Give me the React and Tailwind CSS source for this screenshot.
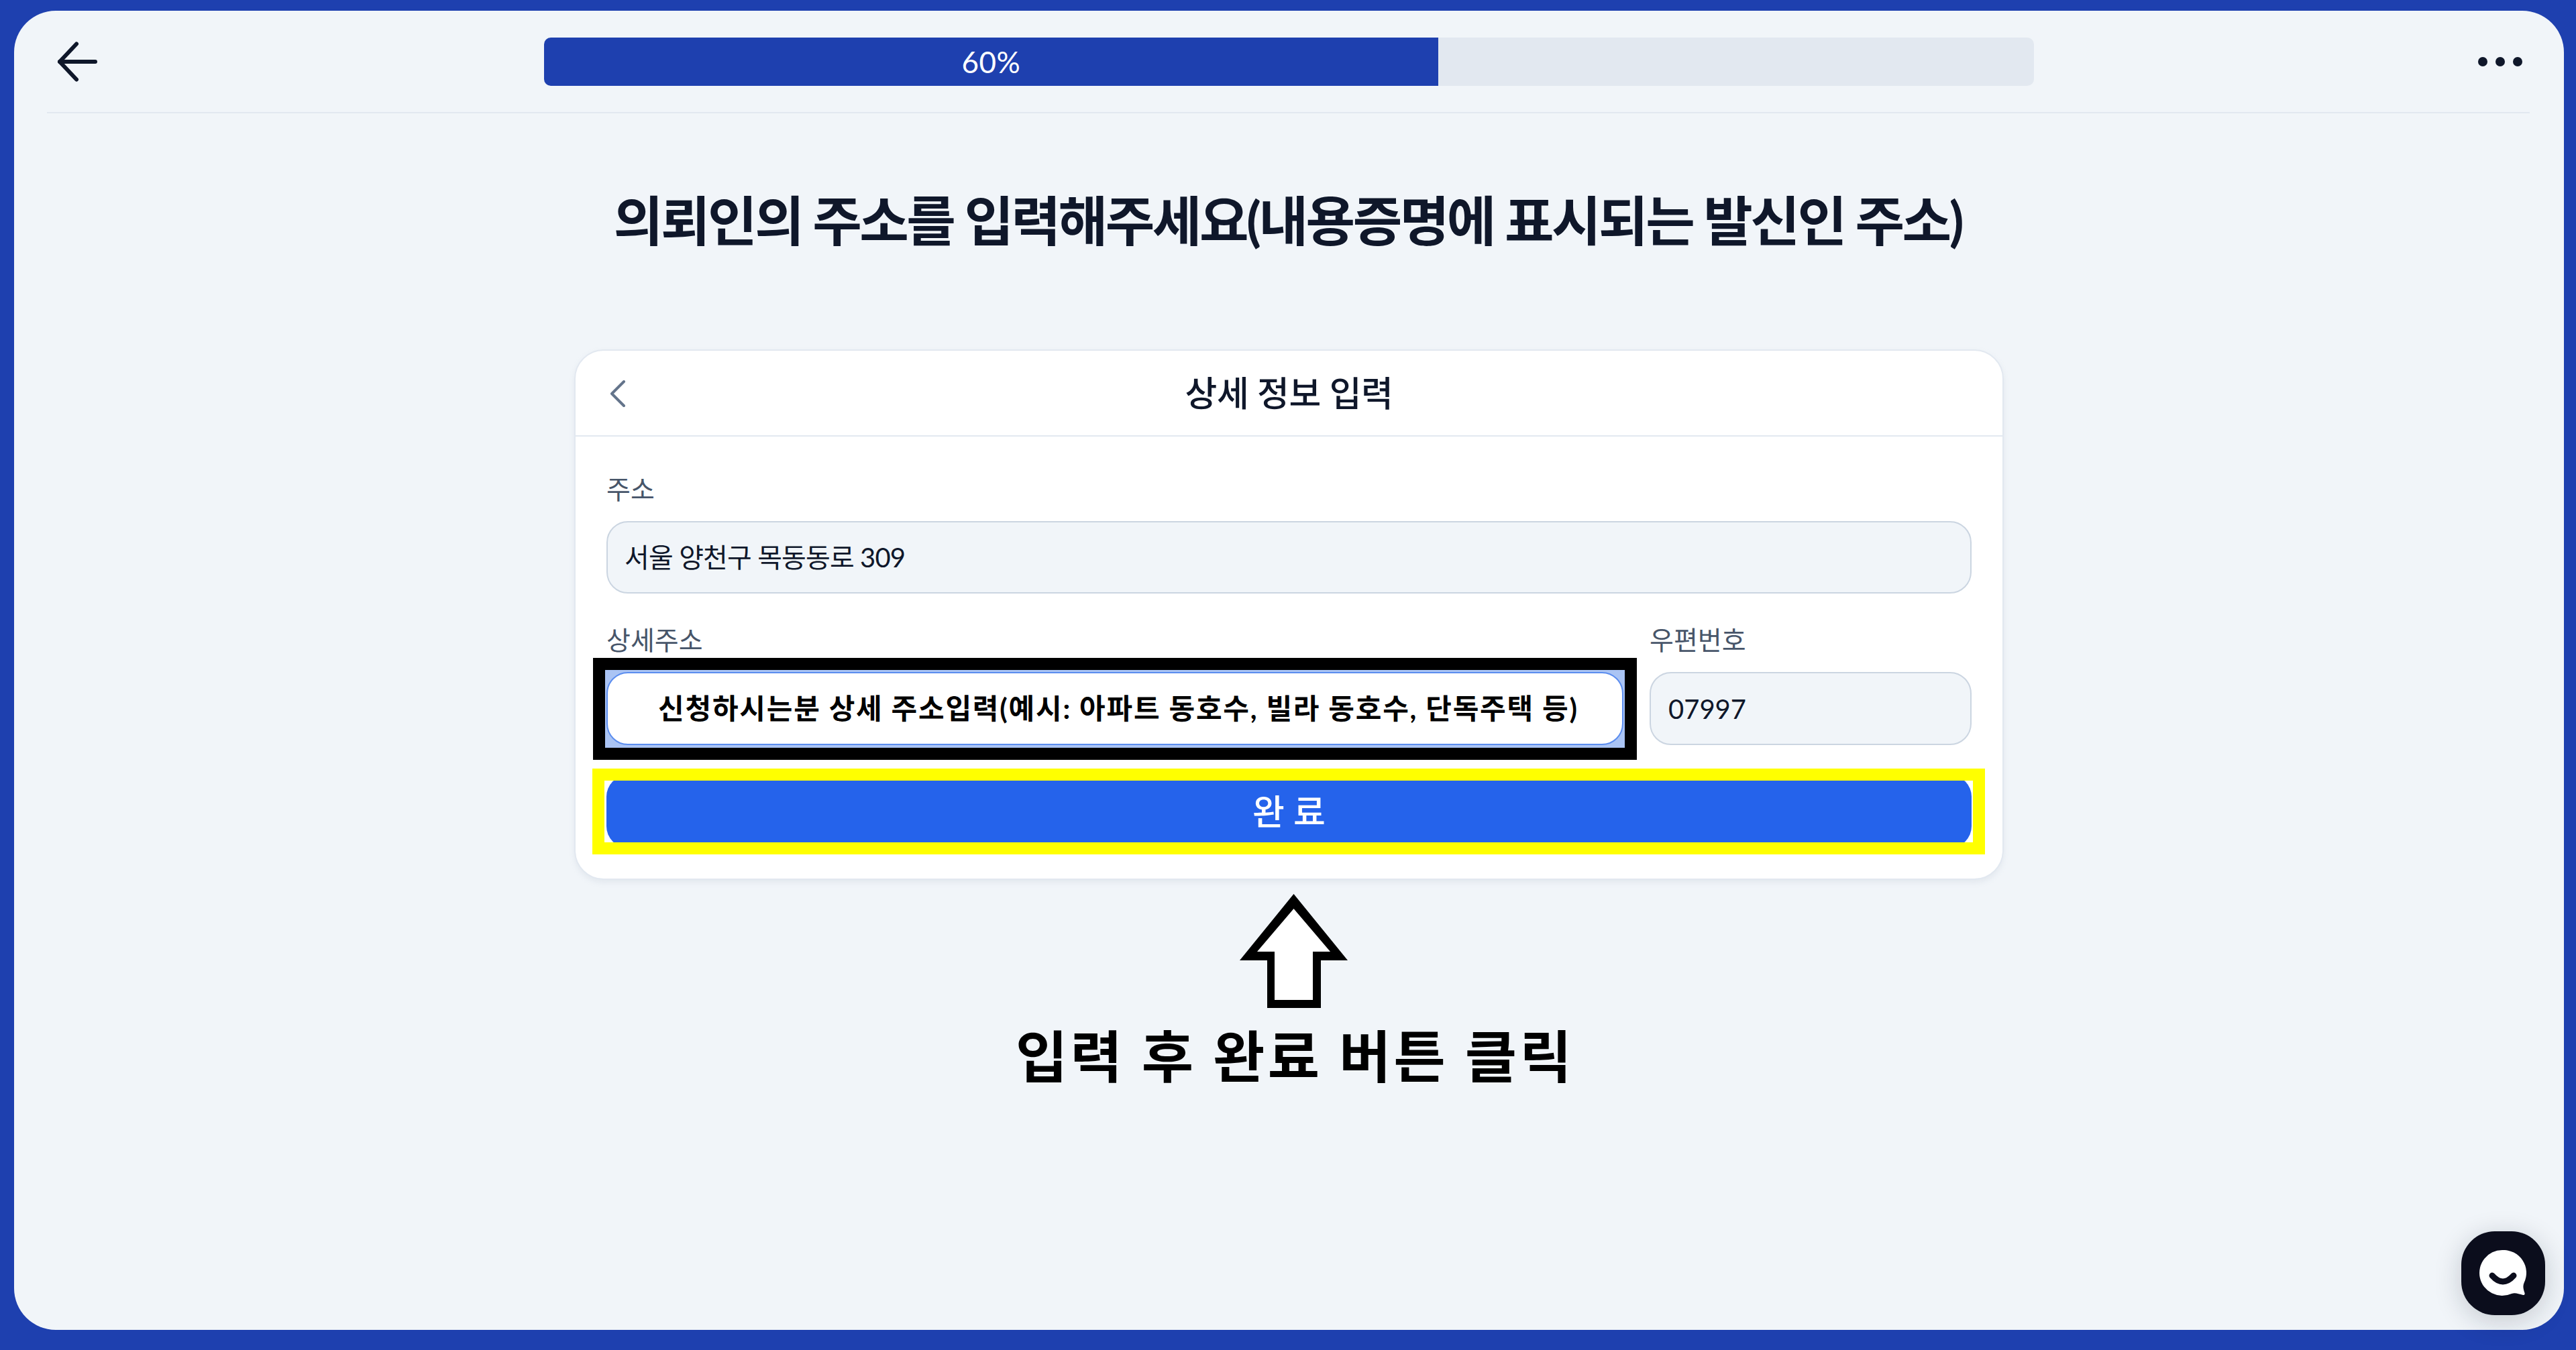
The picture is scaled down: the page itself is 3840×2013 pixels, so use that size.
const krFont = "font-['Lato','Noto_Sans_CJK_KR',sans-serif]";

const BackArrow = () => (
  <svg width="64" height="64" viewBox="0 0 64 64" fill="none" stroke="#0f172a" strokeWidth="6" strokeLinecap="round" strokeLinejoin="round">
    <path d="M58 32H5" />
    <path d="M30 5.500L5 32l25 26.500" />
  </svg>
);

const Dots = () => (
  <div className="flex items-center gap-[12px]">
    <span className="w-[14px] h-[14px] rounded-full bg-[#0f172a]" />
    <span className="w-[14px] h-[14px] rounded-full bg-[#0f172a]" />
    <span className="w-[14px] h-[14px] rounded-full bg-[#0f172a]" />
  </div>
);

const UpArrow = () => (
  <svg width="161" height="170" viewBox="0 0 161 170">
    <path d="M80.500 0L161 99h-40v71H41V99H0z" fill="#000" />
    <path d="M80.500 22L135 86h-26v72H52V86H26z" fill="#fff" />
  </svg>
);

const ChatIcon = () => (
  <svg width="72" height="70" viewBox="0 0 72 70">
    <path d="M34 0a34 34 0 1 0 14 65c5-2 10 0 17 2 2 .5 3-1 2.500-3-2-6-3-10-1-15A34 34 0 0 0 34 0z" fill="#fff" />
    <path d="M19 38Q35 56 51 38" fill="none" stroke="#0b0d1c" strokeWidth="9" strokeLinecap="round" />
  </svg>
);

export default function App() {
  return (
    <div className={`${krFont} w-full h-[2013px] bg-[#1e40af] pt-[16px] pl-[21px] pr-[18px] overflow-hidden`}>
      <div className="relative h-[1967px] rounded-[62px] bg-[#f1f5f9] flex flex-col">
        <header className="flex items-center h-[153px] ml-[49px] mr-[51px] border-b-2 border-[#e2e8f0]">
          <div className="ml-[14px]">
            <BackArrow />
          </div>
          <div className="relative ml-[663px] w-[2221px] h-[72px] rounded-[10px] bg-[#e2e8f0] overflow-hidden">
            <div className="w-[60%] h-full bg-[#1e40af] flex items-center justify-center text-white text-[44px] tracking-[0.5px]">
              60%
            </div>
          </div>
          <div className="ml-auto mr-[11px]">
            <Dots />
          </div>
        </header>

        <h1 className="mt-[119px] pr-[4px] text-center text-[#0f172a] text-[80px] leading-[80px] font-bold tracking-[-3.5px]">
          의뢰인의 주소를 입력해주세요(내용증명에 표시되는 발신인 주소)
        </h1>

        <section className="mt-[153px] mx-auto w-[2131px] h-[791px] rounded-[44px] bg-white border-2 border-[#e2e8f0] shadow-[0_4px_8px_rgba(148,163,184,0.15)] flex flex-col">
          <div className="relative flex items-center justify-center h-[128px] border-b-2 border-[#e2e8f0] shrink-0">
            <svg className="absolute left-[51px] top-[44px]" width="26" height="42" viewBox="0 0 26 42" fill="none" stroke="#64748b" strokeWidth="4" strokeLinecap="round" strokeLinejoin="round">
              <path d="M21 2L3 20l18 18" />
            </svg>
            <span className="text-[52px] font-medium text-[#0f172a] tracking-[-0.4px]">상세 정보 입력</span>
          </div>

          <div className="px-[46px] pt-[53px]">
            <label className="block text-[39px] leading-[50px] text-[#475569]">주소</label>
            <div className="mt-[23px] h-[108px] rounded-[32px] bg-[#f1f5f9] border-2 border-[#cbd5e1] flex items-center pl-[25px] text-[40px] tracking-[-0.9px] text-[#0f172a]">
              서울 양천구 목동동로 309
            </div>

            <div className="mt-[44px] grid grid-cols-[1516px_480px] gap-x-[39px]">
              <div>
                <label className="block text-[39px] leading-[50px] text-[#475569]">상세주소</label>
                <div className="mt-[20px] -mx-[2px] pt-[3px] pb-[4px] px-[2px] bg-[#aac4f4] outline-[18px] outline-solid outline-black">
                  <div className="h-[109px] rounded-[32px] bg-white border-2 border-[#5b8def] flex items-center pl-[75px] text-[42px] font-bold tracking-[1.8px] text-black">
                    신청하시는분 상세 주소입력(예시: 아파트 동호수, 빌라 동호수, 단독주택 등)
                  </div>
                </div>
              </div>
              <div>
                <label className="block text-[39px] leading-[50px] text-[#475569]">우편번호</label>
                <div className="mt-[23px] h-[109px] rounded-[32px] bg-[#f1f5f9] border-2 border-[#cbd5e1] flex items-center pl-[26px] text-[40px] text-[#0f172a]">
                  07997
                </div>
              </div>
            </div>

            <div className="mt-[49px] -ml-[3px] -mr-[2px] h-[92px] bg-white overflow-hidden outline-[18px] outline-solid outline-[#ffff00]">
              <button className="block -mt-[8px] ml-[3px] mr-[2px] w-[2035px] h-[108px] rounded-[32px] bg-[#2563eb] text-white text-[52px] font-medium">
                완 료
              </button>
            </div>
          </div>
        </section>

        <div className="mt-[21px] pl-[14px] flex justify-center">
          <UpArrow />
        </div>
        <p className="mt-[30px] pl-[18px] text-center text-black text-[84px] leading-[84px] font-bold tracking-[4.3px]">
          입력 후 완료 버튼 클릭
        </p>

        <button className="absolute left-[3648px] top-[1820px] w-[125px] h-[125px] rounded-[50px] bg-[#0b0d1c] shadow-[0_8px_40px_rgba(15,23,42,0.2)] flex items-center justify-center">
          <ChatIcon />
        </button>
      </div>
    </div>
  );
}
